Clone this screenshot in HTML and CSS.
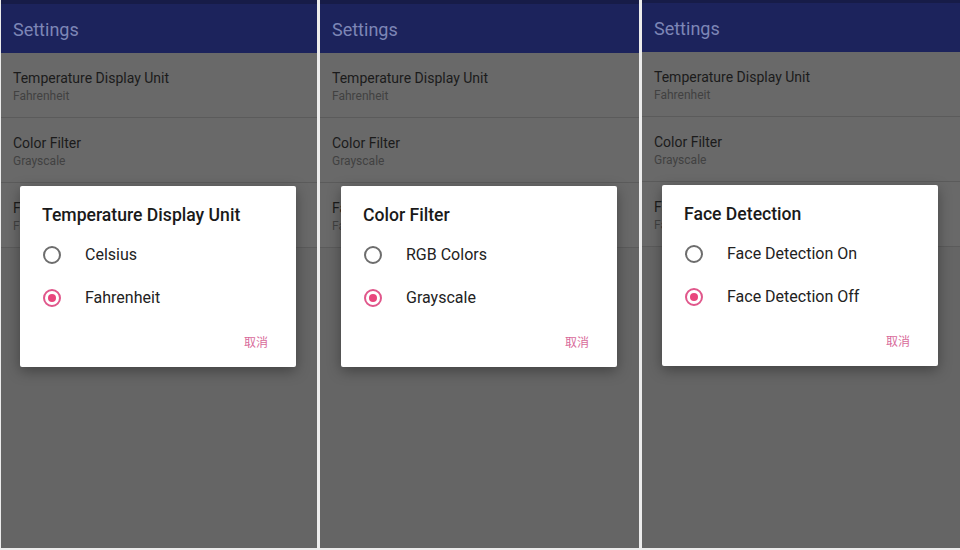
FILE: index.html
```html
<!DOCTYPE html>
<html lang="en">
<head>
<meta charset="utf-8">
<title>Settings dialogs</title>
<link rel="stylesheet" href="styles.css">
</head>
<body>
<div class="screens">
  <section class="panel p1">
    <div class="status"></div>
    <header class="appbar">Settings</header>
    <ul class="list">
      <li class="item"><div class="t">Temperature Display Unit</div><div class="s">Fahrenheit</div></li>
      <li class="item"><div class="t">Color Filter</div><div class="s">Grayscale</div></li>
      <li class="item"><div class="t">Face Detection</div><div class="s">Face Detection Off</div></li>
    </ul>
    <div class="dialog">
      <h2 class="dtitle">Temperature Display Unit</h2>
      <div class="opt"><span class="radio"></span><span class="lbl">Celsius</span></div>
      <div class="opt"><span class="radio on"></span><span class="lbl">Fahrenheit</span></div>
      <div class="actions"><span class="cancel">取消</span></div>
    </div>
  </section>
  <section class="panel p2">
    <div class="status"></div>
    <header class="appbar">Settings</header>
    <ul class="list">
      <li class="item"><div class="t">Temperature Display Unit</div><div class="s">Fahrenheit</div></li>
      <li class="item"><div class="t">Color Filter</div><div class="s">Grayscale</div></li>
      <li class="item"><div class="t">Face Detection</div><div class="s">Face Detection Off</div></li>
    </ul>
    <div class="dialog">
      <h2 class="dtitle">Color Filter</h2>
      <div class="opt"><span class="radio"></span><span class="lbl">RGB Colors</span></div>
      <div class="opt"><span class="radio on"></span><span class="lbl">Grayscale</span></div>
      <div class="actions"><span class="cancel">取消</span></div>
    </div>
  </section>
  <section class="panel p3">
    <div class="status"></div>
    <header class="appbar">Settings</header>
    <ul class="list">
      <li class="item"><div class="t">Temperature Display Unit</div><div class="s">Fahrenheit</div></li>
      <li class="item"><div class="t">Color Filter</div><div class="s">Grayscale</div></li>
      <li class="item"><div class="t">Face Detection</div><div class="s">Face Detection Off</div></li>
    </ul>
    <div class="dialog">
      <h2 class="dtitle">Face Detection</h2>
      <div class="opt"><span class="radio"></span><span class="lbl">Face Detection On</span></div>
      <div class="opt"><span class="radio on"></span><span class="lbl">Face Detection Off</span></div>
      <div class="actions"><span class="cancel">取消</span></div>
    </div>
  </section>
</div>
</body>
</html>
```
FILE: styles.css
```css
* { box-sizing: border-box; }
html, body { margin: 0; padding: 0; }
body {
  width: 960px;
  height: 550px;
  background: #ececec;
  font-family: Roboto, "Noto Sans", "Noto Sans CJK SC", sans-serif;
  overflow: hidden;
}
.screens {
  display: flex;
  gap: 3px;
  padding-left: 1px;
  height: 548px;
}
.panel {
  position: relative;
  height: 548px;
  background: #656565;
  overflow: hidden;
}
.p1 { width: 316px; }
.p2 { width: 319px; }
.p3 { width: 318px; margin-top: -1px; height: 549px; }
.status {
  height: 4px;
  background: #171c48;
}
.appbar {
  height: 49px;
  background: #1c235c;
  color: #7d86b6;
  font-size: 18px;
  line-height: 20px;
  padding: 16px 0 0 12px;
}
.list {
  list-style: none;
  margin: 0;
  padding: 0;
}
.item {
  height: 65px;
  padding: 16px 0 0 12px;
  border-bottom: 1px solid #5b5b5b;
  background: #696969;
}
.t {
  font-size: 14px;
  line-height: 18px;
  color: #1b1b1b;
}
.s {
  margin-top: 1px;
  font-size: 12px;
  line-height: 16px;
  color: #414141;
}
.dialog {
  position: absolute;
  top: 186px;
  left: 20px;
  width: 276px;
  height: 181px;
  background: #ffffff;
  border-radius: 2px;
  box-shadow: 0 4px 14px rgba(0, 0, 0, 0.35);
  padding: 18px 0 0 0;
}
.p1 .dialog { left: 19px; }
.p2 .dialog { left: 21px; }
.dtitle {
  margin: 0;
  padding-left: 22px;
  font-size: 17.6px;
  line-height: 22px;
  font-weight: 500;
  color: #1a1a1a;
}
.opt {
  display: flex;
  align-items: center;
  height: 43px;
}
.dialog .opt:first-of-type { margin-top: 7px; }
.radio {
  width: 18px;
  height: 18px;
  margin-left: 23px;
  border: 2px solid #6d6d6d;
  border-radius: 50%;
  position: relative;
  flex: none;
}
.radio.on {
  border-color: #e0578b;
}
.radio.on::after {
  content: "";
  position: absolute;
  left: 3px;
  top: 3px;
  width: 8px;
  height: 8px;
  border-radius: 50%;
  background: #e9457d;
}
.lbl {
  margin-left: 24px;
  font-size: 16px;
  color: #222222;
}
.actions {
  display: flex;
  justify-content: flex-end;
  padding: 15px 28px 0 0;
}
.cancel {
  font-size: 12px;
  line-height: 16px;
  color: #d86a9a;
  font-family: "Noto Sans CJK SC", sans-serif;
}
```
